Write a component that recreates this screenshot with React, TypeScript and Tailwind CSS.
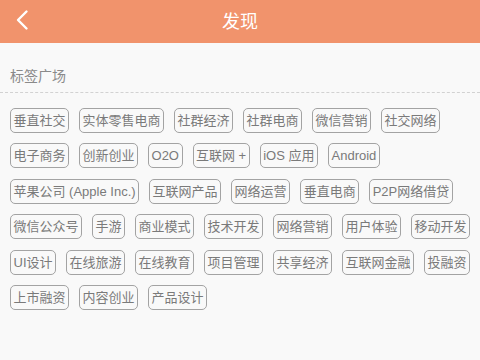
const rows: string[][] = [
  ["垂直社交", "实体零售电商", "社群经济", "社群电商", "微信营销", "社交网络"],
  ["电子商务", "创新创业", "O2O", "互联网 +", "iOS 应用", "Android"],
  ["苹果公司 (Apple Inc.)", "互联网产品", "网络运营", "垂直电商", "P2P网络借贷"],
  ["微信公众号", "手游", "商业模式", "技术开发", "网络营销", "用户体验", "移动开发"],
  ["UI设计", "在线旅游", "在线教育", "项目管理", "共享经济", "互联网金融", "投融资"],
  ["上市融资", "内容创业", "产品设计"],
];

function Tag({ label }: { label: string }) {
  return (
    <span className="flex h-[25px] items-center rounded-[5px] border border-[#a3a3a3] px-[2.5px] text-[13px] leading-none whitespace-nowrap text-[#7a7a7a]">
      {label}
    </span>
  );
}

export default function App() {
  return (
    <div
      className="min-h-[360px] w-[480px] bg-[#f9f9f9]"
      style={{ fontFamily: '"Liberation Sans", "Noto Sans CJK SC", sans-serif' }}
    >
      <header className="relative flex h-[43px] items-center justify-center bg-[#f1936c]">
        <button className="absolute left-[13px] top-[7px] p-[2px]">
          <svg width="14" height="22" viewBox="0 0 14 22" fill="none">
            <path
              d="M11.5 2.5 L3 11 L11.5 19.5"
              stroke="white"
              strokeWidth="2.4"
              strokeLinecap="round"
              strokeLinejoin="round"
            />
          </svg>
        </button>
        <h1 className="text-[18px] leading-none text-white">发现</h1>
      </header>

      <div className="border-b border-dashed border-[#d2d2d2] px-[10px] pt-[25px] pb-[8px]">
        <h2 className="text-[14px] leading-[16px] text-[#8a8a8a]">标签广场</h2>
      </div>

      <div className="flex flex-col gap-y-[10.4px] px-[10px] pt-[15px]">
        {rows.map((row, i) => (
          <div key={i} className="flex gap-x-[10px]">
            {row.map((t) => (
              <Tag key={t} label={t} />
            ))}
          </div>
        ))}
      </div>
    </div>
  );
}
